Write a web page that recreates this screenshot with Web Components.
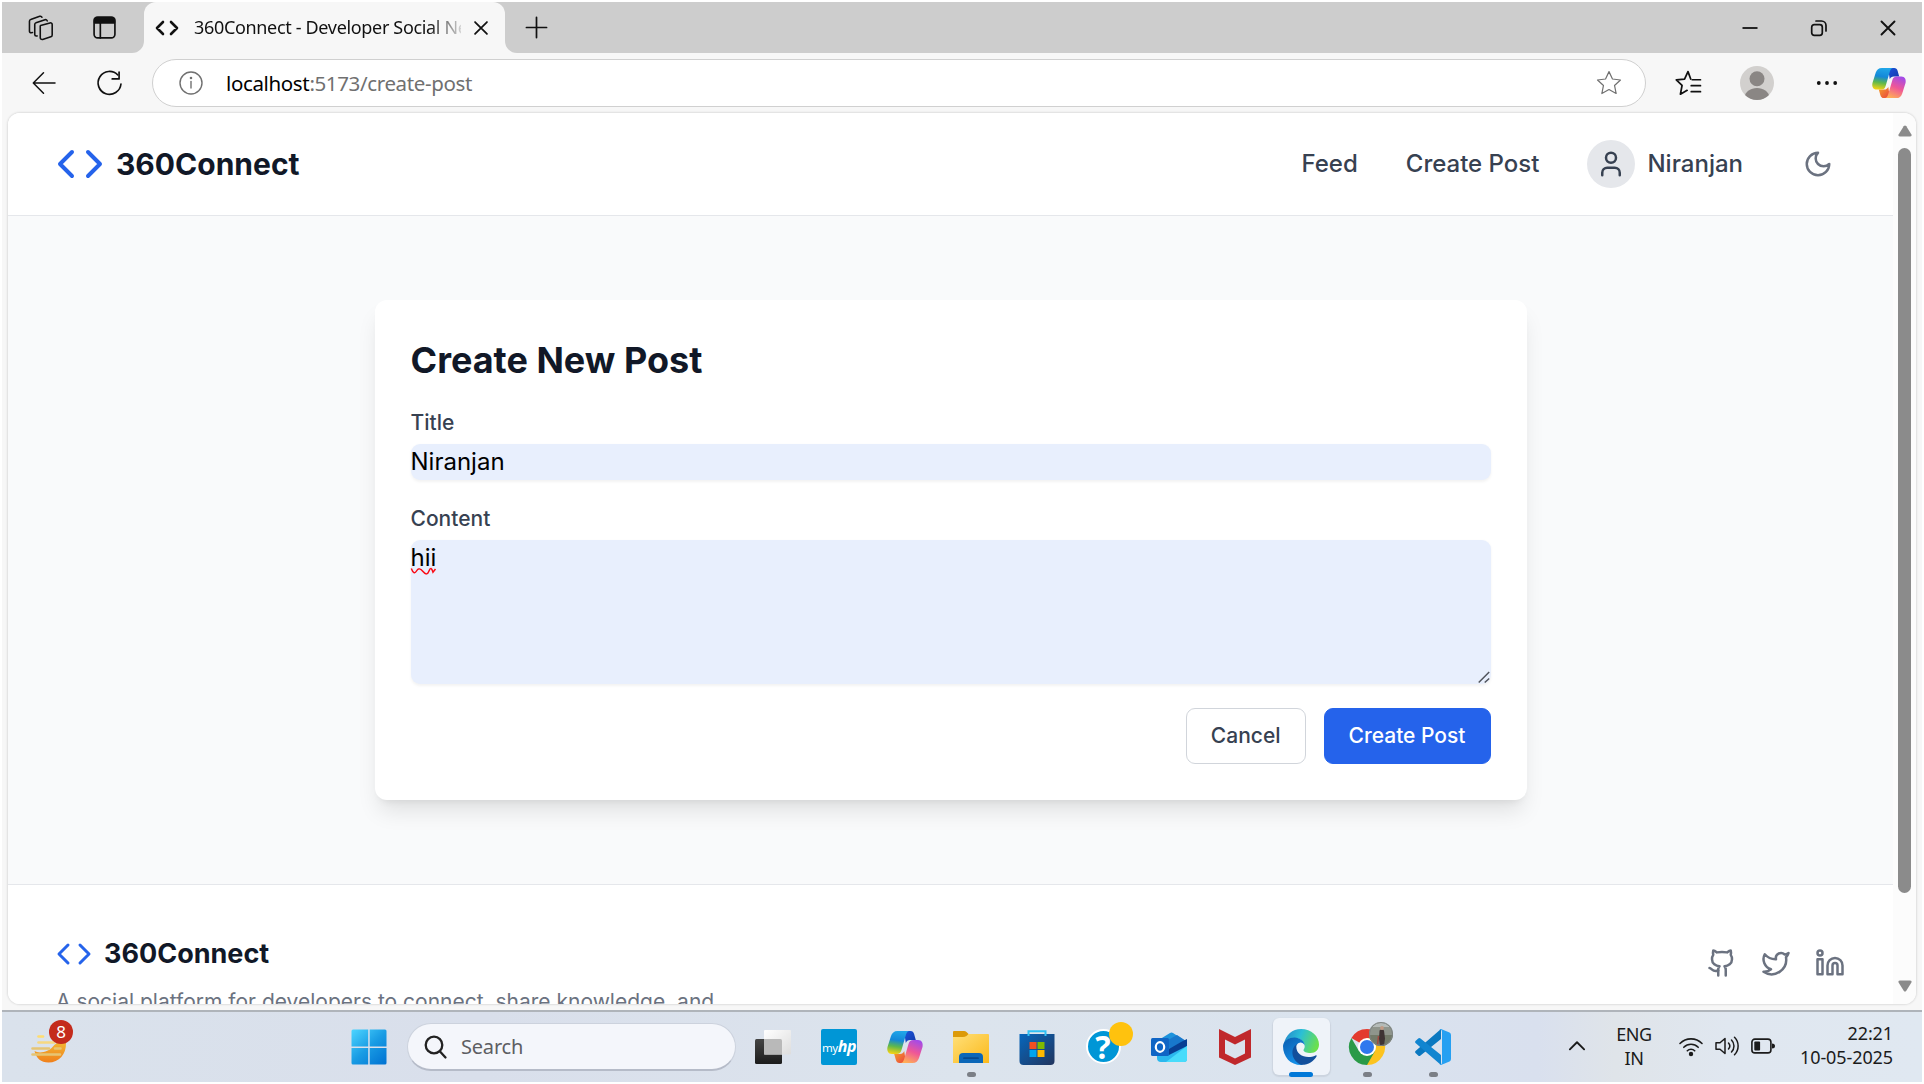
<!DOCTYPE html>
<html lang="en">
<head>
<meta charset="utf-8">
<title>360Connect - Developer Social Network</title>
<style>
html,body{margin:0;padding:0;background:#fff;overflow:hidden}
</style>
</head>
<body>
<desktop-screen></desktop-screen>
<script>
const L = (body, sw = 2) => `<svg viewBox="0 0 24 24" fill="none" stroke="currentColor" stroke-width="${sw}" stroke-linecap="round" stroke-linejoin="round">${body}</svg>`;
const ICONS = {
  code: L('<path d="m16 18 6-6-6-6M8 6l-6 6 6 6"/>'),
  favicon: L('<path d="m16 18 6-6-6-6M8 6l-6 6 6 6"/>', 2.6),
  user: L('<path d="M19 21v-2a4 4 0 0 0-4-4H9a4 4 0 0 0-4 4v2"/><circle cx="12" cy="7" r="4"/>'),
  moon: L('<path d="M12 3a6 6 0 0 0 9 9 9 9 0 1 1-9-9Z"/>'),
  github: L('<path d="M15 22v-4a4.8 4.8 0 0 0-1-3.5c3 0 6-2 6-5.5.08-1.25-.27-2.48-1-3.5.28-1.15.28-2.35 0-3.5 0 0-1 0-3 1.5-2.64-.5-5.36-.5-8 0C6 2 5 2 5 2c-.3 1.15-.3 2.35 0 3.5A5.403 5.403 0 0 0 4 9c0 3.5 3 5.5 6 5.5-.39.49-.68 1.05-.85 1.65-.17.6-.22 1.23-.15 1.85v4"/><path d="M9 18c-4.510 2-5-2-7-2"/>'),
  twitter: L('<path d="M22 4s-.7 2.1-2 3.400c1.600 10-9.400 17.300-18 11.600 2.200.1 4.400-.6 6-2C3 15.500.5 9.600 3 5c2.200 2.600 5.600 4.100 9 4-.9-4.200 4-6.600 7-3.800 1.100 0 3-1.200 3-1.200z"/>'),
  linkedin: L('<path d="M16 8a6 6 0 0 1 6 6v7h-4v-7a2 2 0 0 0-4 0v7h-4v-7a6 6 0 0 1 6-6z"/><rect width="4" height="12" x="2" y="9"/><circle cx="4" cy="4" r="2"/>'),
  workspaces: L('<path d="M11.200 10.200l8.300-2.300a1.600 1.600 0 0 1 2 1.500v9.300c0 .8-.5 1.400-1.200 1.600l-7.300 2.300a1.600 1.600 0 0 1-2.100-1.500v-9.300c0-.8-.3-1.300.3-1.600z"/><path d="M8.200 19.500l-.8.100a1.400 1.400 0 0 1-1.400-1.400V9.300c0-.8.4-1.400 1.100-1.600l8-2.600c1-.3 1.800.2 2 1"/><path d="M4 16.500l-1.200.2A1.300 1.300 0 0 1 1.300 15.400V6.500c0-.8.4-1.400 1.100-1.600l8-2.800c1-.3 1.700.1 2 .8"/>', 1.4),
  tabs: L('<rect x="2" y="2" width="20" height="20" rx="3.500"/><path d="M8 8v14"/><path d="M2.500 3.500h19v4h-19z" fill="currentColor"/>', 1.6),
  x: L('<path d="M5.500 5.500l13 13M18.500 5.500l-13 13"/>', 1.9),
  plus: L('<path d="M12 1.500v21M1.500 12h21"/>', 1.8),
  min: L('<path d="M4.500 12h15" stroke-linecap="butt"/>', 1.8),
  restore: L('<rect x="4.700" y="8.700" width="10.600" height="10.600" rx="2.500"/><path d="M9 5h5.500a4.500 4.500 0 0 1 4.500 4.500V15"/>', 1.7),
  back: L('<path d="M23 12H1.500M11.500 1.800L1.300 12l10.200 10.200"/>', 1.5),
  reload: L('<path d="M20 3.800A11 11 0 1 0 23 12.500"/><path d="M21.200 1v6.600h-6.600"/>', 1.6),
  info: L('<circle cx="12" cy="12" r="11"/><path d="M12 10.500v6.500"/><circle cx="12" cy="7" r=".6" fill="currentColor"/>', 1.4),
  star: L('<path d="M12 1.500l3.200 6.800 7.400.9-5.500 5.100 1.500 7.400L12 18l-6.600 3.700 1.500-7.400-5.500-5.100 7.400-.9z"/>', 1.1),
  favs: L('<path d="M14.500 8.300L12 1.500 8.800 8.400 1.200 9.200l5.300 5.100-1.500 8 6.200-3.500M16 9h7.500M15 14.500h8.500M15 20h8.500"/>', 1.6),
  dots: `<svg viewBox="0 0 24 24" fill="currentColor"><circle cx="3.800" cy="12" r="1.900"/><circle cx="12" cy="12" r="1.900"/><circle cx="20.200" cy="12" r="1.900"/></svg>`,
  profile: `<svg viewBox="0 0 34 34"><defs><clipPath id="c"><circle cx="17" cy="17" r="17"/></clipPath></defs><g clip-path="url(#c)"><path fill="#d2d0ce" d="M0 0h34v34H0z"/><circle cx="17" cy="12.700" r="7.500" fill="#8a8684"/><path d="M4.500 31c1-5.500 6-9 12.500-9s11.500 3.500 12.500 9l-4 3h-17z" fill="#8a8684"/></g></svg>`,
  copilot: `<svg viewBox="0 0 36 36"><defs>
    <linearGradient id="a" x1=".5" y1="0" x2=".35" y2="1"><stop offset="0" stop-color="#20a6e8"/><stop offset=".4" stop-color="#1488d8"/><stop offset=".68" stop-color="#5eb84c"/><stop offset="1" stop-color="#f5d313"/></linearGradient>
    <linearGradient id="b" x1=".7" y1="0" x2=".3" y2="1"><stop offset="0" stop-color="#a34be8"/><stop offset=".5" stop-color="#ef5797"/><stop offset="1" stop-color="#ffae57"/></linearGradient>
    <linearGradient id="d" x1="0" y1="0" x2="1" y2="1"><stop offset="0" stop-color="#1b55dd"/><stop offset="1" stop-color="#1238a8"/></linearGradient>
    <linearGradient id="e" x1="0" y1="0" x2="1" y2="1"><stop offset="0" stop-color="#f5a52a"/><stop offset="1" stop-color="#e9403f"/></linearGradient></defs>
    <path d="M17 2h6.500c2 0 3 1 3.600 3l1.700 6H23c-2 0-3.500 1-4.200 3z" fill="url(#d)"/>
    <path d="M19 34h-6.500c-2 0-3-1-3.600-3l-1.700-6H13c2 0 3.500-1 4.200-3z" fill="url(#e)"/>
    <path d="M10.500 2H22c-1.800.5-2.500 2-3 3.500L14.500 21c-.8 2.800-2 4-5 4H5C1 25-.3 21.500.5 18L4 7c1-3 3-5 6.500-5z" fill="url(#a)"/>
    <path d="M25.500 34H14c1.800-.5 2.500-2 3-3.500L21.500 15c.8-2.800 2-4 5-4H31c4 0 5.300 3.500 4.500 7L32 29c-1 3-3 5-6.500 5z" fill="url(#b)"/></svg>`,
  weather: `<svg viewBox="0 0 36 36"><defs><linearGradient id="w" x1="0" y1="0" x2="0" y2="1"><stop offset="0" stop-color="#f2b632"/><stop offset="1" stop-color="#f0801c"/></linearGradient></defs>
    <path d="M3.500 20C8 23 18 21 22 15.500c2-3.500 7-5 13-4 .5 12-7 20-17.500 20C10 31.500 5 27 3.500 20z" fill="url(#w)"/>
    <g stroke-linecap="round" stroke-width="2.600"><path d="M7.500 5.500h4.500" stroke="#ffdd70"/><path d="M7.500 11.500H23" stroke="#f6d880"/><path d="M1.500 17.500H18M24 17.500h5.500M1.500 23.500H29" stroke="#e6c574"/></g></svg>`,
  windows: `<svg viewBox="0 0 36 36"><defs><linearGradient id="g" gradientUnits="userSpaceOnUse" x1="2" y1="0" x2="34" y2="36"><stop offset="0" stop-color="#4cd4ff"/><stop offset=".5" stop-color="#199ce4"/><stop offset="1" stop-color="#0072d2"/></linearGradient></defs><path fill="url(#g)" d="M2 .5h15.200v17H.5V2Q.5.500 2 .5zM18.700.5H34Q35.500.5 35.500 2v15.500H18.700zM.5 19h16.700v16.500H2Q.5 35.500.5 34zM18.700 19h16.800v15q0 1.500-1.500 1.500H18.700z"/></svg>`,
  search: L('<circle cx="11" cy="10" r="8.300"/><path d="M17 16.500l5.500 6"/>', 2.3),
  taskview: `<svg viewBox="0 0 36 36"><defs><linearGradient id="k" x1="0" y1="0" x2="0" y2="1"><stop offset="0" stop-color="#444"/><stop offset="1" stop-color="#1c1c1c"/></linearGradient><linearGradient id="m" x1="0" y1="0" x2="1" y2="1"><stop offset="0" stop-color="#fff"/><stop offset="1" stop-color="#ddd"/></linearGradient></defs><rect y="10" width="27" height="25" rx="1.500" fill="url(#k)"/><rect x="9" y="1" width="27" height="24.500" rx="1" fill="url(#m)"/><path d="M9 10h16.500q1.500 0 1.500 1.500v14H9z" fill="#b9b9b9"/></svg>`,
  folder: `<svg viewBox="0 0 36 36"><defs><linearGradient id="f" x1="0" y1="0" x2="1" y2="1"><stop offset="0" stop-color="#ffe07a"/><stop offset="1" stop-color="#fbb91a"/></linearGradient></defs><path d="M0 3q0-1 1-1h10q1.500 0 2.500 1L16 5.500V12H0z" fill="#dc9a08"/><path d="M0 8h10q2 0 3.500-1l2-2H35q1 0 1 1v28H0z" fill="url(#f)"/><path d="M6 34V28q0-4 4-4h16q4 0 4 4v6z" fill="#0b67b8"/><path d="M11 29.200h14" stroke="#064a8e" stroke-width="1.800" stroke-linecap="round"/></svg>`,
  store: `<svg viewBox="0 0 36 36"><defs><linearGradient id="s" x1="0" y1="0" x2="1" y2="1"><stop offset="0" stop-color="#0667bd"/><stop offset="1" stop-color="#22355e"/></linearGradient></defs><path d="M.5 5H35.500V32q0 4-4 4h-27q-4 0-4-4z" fill="url(#s)"/><path d="M9.500 7V2.200h17V7" fill="none" stroke="#2fc0f4" stroke-width="2"/><path d="M10.500 13h7v7h-7z" fill="#f25022"/><path d="M18.500 13h7v7h-7z" fill="#7fba00"/><path d="M10.500 21h7v7h-7z" fill="#00a4ef"/><path d="M18.500 21h7v7h-7z" fill="#ffb900"/></svg>`,
  outlook: `<svg viewBox="0 0 36 36"><path d="M6 12L19 4q1.500-1.200 3 0l14 9v15L8 26z" fill="#1d93dc"/><path d="M17 11l9-5 9 6-16 11z" fill="#1878cc"/><path d="M36 11v9L19 27v-5z" fill="#083f93"/><path d="M6 27l13-4 17-9v16q0 3-3 3H10q-4 0-4-4z" fill="#2bb8ee"/><path d="M36 12v5L18 26v-6l12-7 6-3z" fill="#083f93"/><path d="M15 33l21-16v13q0 3-3 3z" fill="#48dcfb"/><rect y="9" width="18" height="18" rx="1.500" fill="#0f65c5"/><ellipse cx="9" cy="18" rx="4.200" ry="4.800" fill="none" stroke="#fff" stroke-width="2.200"/></svg>`,
  mcafee: `<svg viewBox="0 0 36 36"><path fill-rule="evenodd" fill="#c0282c" d="M2 0l16 8L34 0v28.500L18 36 2 28.500zM8 10.500v14L18 29.500 28 24.500v-14L18 15.500z"/></svg>`,
  edge: `<svg viewBox="0 0 36 36"><defs><linearGradient id="p" x1="0" y1=".2" x2="1" y2=".5"><stop offset="0" stop-color="#2489cd"/><stop offset=".45" stop-color="#2bbfd6"/><stop offset="1" stop-color="#6be04c"/></linearGradient><linearGradient id="q" x1="0" y1="0" x2=".5" y2="1"><stop offset="0" stop-color="#0a5db0"/><stop offset="1" stop-color="#1590e8"/></linearGradient></defs>
    <path d="M1 14.500C2.500 6 9.500 0 18 0c10.500 0 18 7.500 18 15.500 0 5-3.500 8.500-8.500 8.500-4 0-7-1.300-7-2.800 0-1 1.200-1.500 1.200-4C21.700 12.500 17 9 11.500 9 7 9 3 11 1 14.500z" fill="url(#p)"/>
    <path d="M0 17C.5 11.500 6 8.500 11.500 8.500c5.500 0 10.200 3.800 10.200 8-1-2-3-3.200-5-2.800-6 1.200-7.700 12.300 3.300 21.800-1 .5-1 .5-2 .5C7.500 36 0 28 0 17z" fill="url(#q)"/>
    <path d="M14.500 14.700C7.500 18 7 30.500 18 35.800c7 .4 12.500-3.300 15.500-8.300.5-1-.3-1.500-1-1.100C24 30.500 13 26.500 13.300 17.500c0-1 .5-2 1.200-2.800z" fill="#124f9c"/></svg>`,
  chrome: `<svg viewBox="0 0 36 36"><path d="M18 18L2.400 9A18 18 0 0 1 33.600 9z" fill="#e33b2e"/><path d="M18 18L33.600 9A18 18 0 0 1 18 36z" fill="#fcc31f"/><path d="M18 18l7.800 4.500L18 36A18 18 0 0 1 2.400 9l7.800 13.500z" fill="#2a9a48"/><path d="M18 9h15.600L25.800 22.500z" fill="#fcc31f"/><circle cx="18" cy="18" r="9" fill="#fff"/><circle cx="18" cy="18" r="7" fill="#2f78ee"/></svg>`,
  vscode: `<svg viewBox="0 0 36 36"><path d="M26 0v10L5.500 26.500q-1.200 1-2.300 0L.5 24q-1-1 0-2z" fill="#0a78c0"/><path d="M26 36V26L5.500 9.500q-1.200-1-2.300 0L.5 12q-1 1 0 2z" fill="#1185d0"/><path d="M26 0l8.500 3.500Q36 4.200 36 6v24q0 1.800-1.500 2.500L26 36q-1 0-1.500-1 2.500 1.500 2.500-2V3q0-3-2.500-2 .5-1 1.500-1z" fill="#26a0f2"/></svg>`,
  person: `<svg viewBox="0 0 24 24"><defs><clipPath id="h"><circle cx="12" cy="12" r="12"/></clipPath></defs><g clip-path="url(#h)"><path fill="#8f958c" d="M0 0h24v24H0z"/><path fill="#b4bbb8" d="M0 0h24v5H0z"/><path fill="#737a69" d="M0 13h24v11H0z"/><path fill="#3f3434" d="M10.500 8.500q2.500-2 4.500 0l1 8-1 7h-4l-1-7z"/><circle cx="13" cy="6" r="1.900" fill="#c29a84"/><path d="M9.500 14l-1 9" stroke="#a04a40" stroke-width="1.500"/></g><circle cx="12" cy="12" r="11.500" fill="none" stroke="#7d8383"/></svg>`,
  up: L('<path d="M2.500 16.500L12 7l9.500 9.500"/>', 2.5),
  wifi: L('<path d="M1 9.500a15.500 15.500 0 0 1 22 0M4.800 13.300a10.200 10.200 0 0 1 14.400 0M8.300 16.800a5.200 5.200 0 0 1 7.400 0"/><circle cx="12" cy="20" r="1.400" fill="currentColor"/>', 1.6),
  sound: L('<path d="M1 8.800h4l5-4.300v15l-5-4.300H1zM13.500 9a4.500 4.500 0 0 1 0 6M16.500 6a8.500 8.500 0 0 1 0 12M19.500 3.200a12.500 12.500 0 0 1 0 17.600"/>', 1.5),
  battery: `<svg viewBox="0 0 24 24"><rect x=".9" y="5.100" width="19" height="13.800" rx="3" fill="none" stroke="currentColor" stroke-width="1.600"/><rect x="3.300" y="7.500" width="5.800" height="9" rx="1" fill="currentColor"/><path d="M21 9.500q3 0 3 2.500t-3 2.500z" fill="currentColor"/></svg>`,
  arrow: `<svg viewBox="0 0 16 12"><path d="M6.700 1.300q1.300-1.800 2.600 0l5 8q.9 2.200-1.300 2.200H3q-2.200 0-1.300-2.200z" fill="#8b8b8b"/></svg>`,
  grip: `<svg viewBox="0 0 12 12" fill="none" stroke="#50545c" stroke-width="1.500"><path d="M.7 11.500L11.200 1M6.700 11.500L11.200 7.500"/></svg>`,
  wave: `<svg viewBox="0 0 25 7" fill="none" stroke="#fa0a14" stroke-width="1.500"><path d="M.3 1.500Q3 8.500 5.500 4T12 4.500 18 4 22 5.200L24.500 2"/></svg>`,
  flare: `<svg viewBox="0 0 12 12"><path d="M12 0v12H0A12 12 0 0 0 12 0z" fill="#f7f7f7"/></svg>`
};

function define(name, css, html) {
  customElements.define(name, class extends HTMLElement {
    constructor() {
      super();
      const t = document.createElement('template');
      t.innerHTML = `<style>*{box-sizing:border-box}:host{box-sizing:border-box}${css}</style>${html}`;
      this.attachShadow({mode: 'open'}).appendChild(t.content.cloneNode(true));
    }
  });
}

customElements.define('ui-icon', class extends HTMLElement {
  connectedCallback() {
    if (this.shadowRoot) return;
    const s = this.getAttribute('size') || 24, h = this.getAttribute('h') || s;
    this.attachShadow({mode: 'open'}).innerHTML =
      `<style>:host{display:block;flex:none;width:${s}px;height:${h}px}svg{display:block;width:100%;height:100%;overflow:visible}</style>${ICONS[this.getAttribute('name')]}`;
  }
});

define('brand-mark', `
:host{display:flex;align-items:center;gap:12px;color:#111827;font-weight:700}`,
`<slot name="icon"></slot><span><slot></slot></span>`);

define('tab-strip', `
:host{display:flex;height:51px;background:#cdcdcd;color:#111;align-items:center}
.left{display:flex;gap:37px;width:130px;padding-left:26px;align-items:center}
.tab{display:flex;align-items:center;width:361px;height:51px;background:#f7f7f7;border-radius:12px 12px 0 0;padding:0 13px 0 11px}
.flare{align-self:flex-end}
.flare.r{transform:scaleX(-1)}
.title{margin:0 9px 2px 15px;width:271px;overflow:hidden;white-space:nowrap;font-size:18px;line-height:28px;letter-spacing:-.33px;-webkit-mask-image:linear-gradient(90deg,#000 88%,rgba(0,0,0,.15) 100%)}
.ctl{margin-left:auto;display:flex;gap:45px;padding-right:22px}`,
`<div class="left"><ui-icon name="workspaces" size="27"></ui-icon><ui-icon name="tabs" size="25"></ui-icon></div>
<ui-icon class="flare" name="flare" size="12"></ui-icon>
<div class="tab"><ui-icon name="favicon" size="24"></ui-icon><span class="title">360Connect - Developer Social Network</span><ui-icon name="x" size="22"></ui-icon></div>
<ui-icon class="flare r" name="flare" size="12"></ui-icon>
<ui-icon name="plus" size="23" style="margin-left:8px"></ui-icon>
<div class="ctl"><ui-icon name="min" size="24"></ui-icon><ui-icon name="restore" size="24"></ui-icon><ui-icon name="x" size="24"></ui-icon></div>`);

define('address-bar', `
:host{display:flex;height:60px;background:#f7f7f7;color:#111;align-items:center;padding-left:30px}
.box{display:flex;align-items:center;width:1494px;height:48px;margin-left:29px;border:1.5px solid #d0d0d0;border-radius:24px;background:#fff;padding:0 23px 0 26px;color:#707070}
.url{margin-left:23px;flex:1;font-size:20.500px;letter-spacing:-.36px;line-height:30px}
b{font-weight:400;color:#000}`,
`<ui-icon name="back" size="24"></ui-icon><ui-icon name="reload" size="25" style="margin-left:41px;margin-right:1px"></ui-icon>
<div class="box"><ui-icon name="info" size="24"></ui-icon><span class="url"><b>localhost</b>:5173/create-post</span><ui-icon name="star" size="26"></ui-icon></div>
<ui-icon name="favs" size="26" style="margin-left:29px"></ui-icon>
<ui-icon name="profile" size="34" style="margin-left:39px"></ui-icon>
<ui-icon name="dots" size="24" style="margin-left:41px"></ui-icon>
<ui-icon name="copilot" size="34" style="margin-left:33px"></ui-icon>`);

define('site-header', `
:host{display:flex;height:103px;flex:none;align-items:center;justify-content:space-between;padding:0 48px;background:#fff;border-bottom:1.500px solid #e5e7eb}
brand-mark{font-size:30px;line-height:42px}
nav{display:flex;align-items:center;font-size:24px;font-weight:500;line-height:36px;color:#374151}
.post{margin:0 48px}
.av{display:flex;align-items:center;justify-content:center;width:48px;height:48px;border-radius:50%;background:#e5e7eb;margin-right:12px}
.moon{padding:12px;margin-left:48px;color:#6b7280}`,
`<brand-mark><ui-icon slot="icon" name="code" size="48" style="color:#2563eb"></ui-icon>360Connect</brand-mark>
<nav><span>Feed</span><span class="post">Create Post</span><span class="av"><ui-icon name="user" size="30"></ui-icon></span><span>Niranjan</span><span class="moon"><ui-icon name="moon" size="30"></ui-icon></span></nav>`);

define('form-field', `
:host{display:block;margin-bottom:24px}
.l{font-size:21px;font-weight:500;line-height:30px;color:#374151;margin-bottom:6px}
.c{display:flex;flex-direction:column;height:var(--h,36px);border-radius:9px;background:#e8effd;box-shadow:0 1.500px 3px rgba(0,0,0,.05);font-size:24px;line-height:36px;color:#000}`,
`<div class="l"><slot name="label"></slot></div><div class="c"><slot></slot></div>`);

define('push-button', `
:host{display:flex;align-items:center;height:56px;padding:0 24px 1px;border:1.500px solid #d1d5db;border-radius:9px;background:#fff;color:#374151;font-size:21px;line-height:30px;font-weight:500}
:host([primary]){background:#2563eb;border-color:#2563eb;color:#fff}`,
`<slot></slot>`);

define('post-form', `
:host{display:block;width:1152px;height:500px;padding:36px;border-radius:12px;background:#fff;box-shadow:0 15px 22.500px -4.500px rgba(0,0,0,.1),0 6px 9px -6px rgba(0,0,0,.1)}
h1{margin:0 0 24px;font-size:36px;line-height:48px;font-weight:700;color:#111827}
.area{--h:144px}
.grip{align-self:flex-end;margin:auto 1px 1px 0}
.wave{margin-top:-9px}
.row{display:flex;justify-content:flex-end;gap:18px}`,
`<h1>Create New Post</h1>
<form-field><span slot="label">Title</span><span>Niranjan</span></form-field>
<form-field class="area"><span slot="label">Content</span><span>hii</span><ui-icon class="wave" name="wave" size="25" h="7"></ui-icon><ui-icon class="grip" name="grip" size="12"></ui-icon></form-field>
<div class="row"><push-button>Cancel</push-button><push-button primary>Create Post</push-button></div>`);

define('site-footer', `
:host{display:flex;justify-content:space-between;flex:none;height:240px;padding:48px;border-top:1.500px solid #e5e7eb;background:#fff}
brand-mark{font-size:27px;line-height:42px;margin-bottom:12px}
p{margin:0;font-size:21px;line-height:30px;color:#6b7280;white-space:nowrap}
.soc{display:flex;gap:24px;color:#6b7280;padding-top:15px}`,
`<div><brand-mark><ui-icon slot="icon" name="code" size="36" style="color:#2563eb"></ui-icon>360Connect</brand-mark><p>A social platform for developers to connect, share knowledge, and</p></div>
<div class="soc"><ui-icon name="github" size="30"></ui-icon><ui-icon name="twitter" size="30"></ui-icon><ui-icon name="linkedin" size="30"></ui-icon></div>`);

define('scroll-bar', `
:host{display:flex;flex-direction:column;align-items:center;width:23px;flex:none;background:#fcfcfc;padding:12px 0}
.thumb{width:13px;height:745px;border-radius:7px;background:#8b8b8b;margin-top:11px}
.down{margin-top:auto;transform:rotate(180deg)}`,
`<ui-icon name="arrow" size="16" h="12"></ui-icon><div class="thumb"></div><ui-icon class="down" name="arrow" size="16" h="12"></ui-icon>`);

define('browser-window', `
:host{display:flex;flex-direction:column;height:1008px;background:#f7f7f7}
.view{display:flex;width:1908px;height:891px;margin-left:6px;border-radius:12px;overflow:hidden;background:#fff;box-shadow:0 0 2px 1px rgba(0,0,0,.1)}
.page{display:flex;flex-direction:column;flex:1;overflow:hidden;font-family:Inter,sans-serif;background:#f9fafb}
main{flex:none;height:668px;display:flex;justify-content:center;padding-top:84px}`,
`<tab-strip></tab-strip><address-bar></address-bar>
<div class="view"><div class="page"><site-header></site-header><main><post-form></post-form></main><site-footer></site-footer></div><scroll-bar></scroll-bar></div>`);

define('task-app', `
:host{display:flex;width:66px;height:68px;align-items:center;justify-content:center;position:relative}
.tile{display:flex;align-items:center;justify-content:center;width:57px;height:57px;border-radius:6px}
:host([active]) .tile{background:#eff3f9;box-shadow:0 1px 1px 1px #ccd4df}
i{display:none;position:absolute;left:29px;bottom:4px;width:9px;height:5px;border-radius:3px;background:#7b7f86}
:host([running]) i,:host([active]) i{display:block}
:host([active]) i{left:21px;width:24px;background:#0078d8}`,
`<div class="tile"><slot></slot></div><i></i><slot name="badge"></slot>`);

define('task-bar', `
:host{display:flex;height:72px;border-top:2px solid #afb4ba;background:linear-gradient(90deg,#dae2ec 0,#d9dfeb 25%,#dce4ed 50%,#dae3ee 70%,#d9e0ee 80%,#dfe4e9 84%,#e0e7f0 90%,#e0e8f1 100%);align-items:center;color:#1b1b1b}
.weather{position:relative;margin-left:29px;width:36px;padding-top:4px}
.badge{position:absolute;left:18px;top:-7px;width:24px;height:24px;border-radius:50%;background:#c42b1c;color:#fff;font-size:17px;line-height:23px;text-align:center}
.search{display:flex;align-items:center;width:329px;height:48px;margin-left:20px;border:1.500px solid #ccd2dd;border-bottom:2px solid #b5bbc8;border-radius:24px;background:#f4f6fb;padding-left:15px;gap:14px;font-size:20px;letter-spacing:-.2px;color:#5d5e62}
.apps{display:flex;margin:-1px 0 0 4px}
.hp{width:36px;height:36px;background:#0096d6;border-radius:2px;color:#fff;font-size:11.500px;line-height:35px;text-align:center;letter-spacing:-.5px}
.hp em{font-weight:700;font-size:16px}
.q{width:35px;height:35px;border:2px solid #fff;border-radius:50%;background:#0096d6;color:#fff;font-weight:700;font-size:32px;line-height:31px;text-align:center}
.dot{position:absolute;left:39px;top:9px;width:24px;height:24px;border-radius:50%;background:#ffc20e}
.face{position:absolute;left:35px;top:9px}
.tray{display:flex;align-items:center;margin:-2px 0 0 auto;padding-right:29px;font-size:18px;line-height:24px}
.lang{text-align:center;width:50px;margin:0 20px 0 23px;letter-spacing:-.4px}
.net{display:flex;gap:12px}
.time{text-align:right;width:118px;letter-spacing:-.1px;margin-top:-2px}`,
`<div class="weather"><ui-icon name="weather" size="36"></ui-icon><span class="badge">8</span></div>
<ui-icon name="windows" size="36" style="margin-left:284px"></ui-icon>
<div class="search"><ui-icon name="search" size="24" style="color:#222"></ui-icon><span>Search</span></div>
<div class="apps">
<task-app><ui-icon name="taskview" size="36"></ui-icon></task-app>
<task-app><div class="hp">my<em>hp</em></div></task-app>
<task-app><ui-icon name="copilot" size="36"></ui-icon></task-app>
<task-app running><ui-icon name="folder" size="36"></ui-icon></task-app>
<task-app><ui-icon name="store" size="36"></ui-icon></task-app>
<task-app><div class="q">?</div><span slot="badge" class="dot"></span></task-app>
<task-app><ui-icon name="outlook" size="36"></ui-icon></task-app>
<task-app><ui-icon name="mcafee" size="36"></ui-icon></task-app>
<task-app active><ui-icon name="edge" size="36"></ui-icon></task-app>
<task-app running><ui-icon name="chrome" size="36"></ui-icon><ui-icon slot="badge" class="face" name="person" size="24"></ui-icon></task-app>
<task-app running><ui-icon name="vscode" size="36"></ui-icon></task-app>
</div>
<div class="tray"><ui-icon name="up" size="18"></ui-icon><div class="lang">ENG<br>IN</div>
<div class="net"><ui-icon name="wifi" size="24"></ui-icon><ui-icon name="sound" size="24"></ui-icon><ui-icon name="battery" size="24"></ui-icon></div>
<div class="time">22:21<br>10-05-2025</div></div>`);

define('desktop-screen', `
:host{display:block;width:1924px;height:1084px;padding:2px;background:#fff;overflow:hidden;font-family:"Noto Sans","Open Sans",sans-serif}`,
`<browser-window></browser-window><task-bar></task-bar>`);
</script>
</body>
</html>
